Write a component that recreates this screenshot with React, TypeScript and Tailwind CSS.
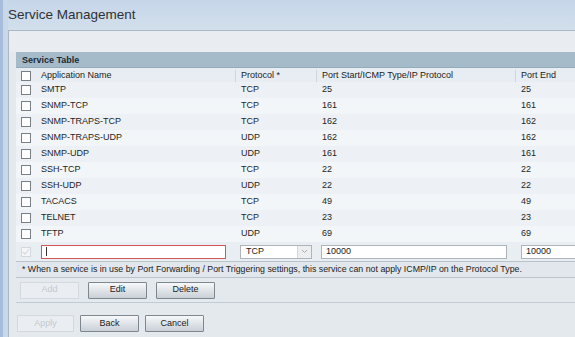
const rows = [
  ["SMTP", "TCP", "25", "25"],
  ["SNMP-TCP", "TCP", "161", "161"],
  ["SNMP-TRAPS-TCP", "TCP", "162", "162"],
  ["SNMP-TRAPS-UDP", "UDP", "162", "162"],
  ["SNMP-UDP", "UDP", "161", "161"],
  ["SSH-TCP", "TCP", "22", "22"],
  ["SSH-UDP", "UDP", "22", "22"],
  ["TACACS", "TCP", "49", "49"],
  ["TELNET", "TCP", "23", "23"],
  ["TFTP", "UDP", "69", "69"],
];

const cols = "grid grid-cols-[19px_200px_81px_199px_1fr]";

const Box = () => (
  <div className="w-[10px] h-[10px] border border-[#7a7f85] bg-white" />
);

const Btn = ({ label, disabled, w = "w-[59px]" }: { label: string; disabled?: boolean; w?: string }) =>
  disabled ? (
    <div className={`${w} h-[17px] flex items-center justify-center border border-[#d2d9df] bg-[#eaeef2] text-[#c3c9cf] text-[9px]`}>
      {label}
    </div>
  ) : (
    <div className={`${w} h-[17px] flex items-center justify-center border border-[#7e8790] rounded-[1px] bg-gradient-to-b from-[#f7f8f9] to-[#c9d0d7] text-[#222] text-[9px]`}>
      {label}
    </div>
  );

export default function App() {
  return (
    <div className="w-[575px] h-[337px] overflow-hidden flex bg-[#c8d8ea] font-['Liberation_Sans',Arial,sans-serif]">
      <div className="w-[3px] bg-[#a6bedb]" />
      <div className="flex-1 flex flex-col pl-[5px] min-w-0">
        <div className="h-[30px] flex items-center text-[13.5px] text-[#2e3136] bg-gradient-to-b from-[#c6d6e9] to-[#d2dfec]">
          Service Management
        </div>
        <div className="flex-1 flex flex-col bg-[#e4e9ee] border-l border-t border-[#aab7c4]">
          <div className="h-[21px] bg-[#e9edf1]" />
          <div className="pl-[7px] w-[580px]">
            <div className="h-[16px] flex items-center pt-[3px] pl-[6px] bg-[#a6bbc9] text-[9px] font-bold text-[#1c2a36] border-b border-[#94abba]">
              Service Table
            </div>
            <div className={`${cols} h-[14px] items-center pt-[1px] bg-[#e7edf2] text-[9px] text-[#222]`}>
              <div className="pl-[5px]"><Box /></div>
              <div className="pl-[6px]">Application Name</div>
              <div className="pl-[5px] border-l border-[#cfd6dd] h-[12px] flex items-center">Protocol *</div>
              <div className="pl-[5px] border-l border-[#cfd6dd] h-[12px] flex items-center">Port Start/ICMP Type/IP Protocol</div>
              <div className="pl-[5px] border-l border-[#cfd6dd] h-[12px] flex items-center">Port End</div>
            </div>
            {rows.map((r, i) => (
              <div
                key={r[0]}
                className={`${cols} h-[16px] items-center text-[9px] text-[#1e1e1e] ${i % 2 === 0 ? "bg-[#edf1f5]" : "bg-[#f3f6f9]"}`}
              >
                <div className="pl-[5px]"><Box /></div>
                <div className="pl-[6px]">{r[0]}</div>
                <div className="pl-[6px]">{r[1]}</div>
                <div className="pl-[6px]">{r[2]}</div>
                <div className="pl-[6px]">{r[3]}</div>
              </div>
            ))}
            <div className={`${cols} h-[19px] items-center text-[9px] text-[#222] bg-[#e9eef2]`}>
              <div className="pl-[5px]">
                <div className="w-[10px] h-[10px] border border-[#d3d8dd] bg-[#f4f6f8] flex items-center justify-center">
                  <svg width="8" height="8" viewBox="0 0 8 8">
                    <path d="M1 4 L3 6 L7 1" stroke="#d6dadf" strokeWidth="1.2" fill="none" />
                  </svg>
                </div>
              </div>
              <div className="pl-[6px]">
                <div className="w-[185px] h-[14px] bg-white border border-[#d2555a] flex items-center pl-[4px]">
                  <div className="w-px h-[9px] bg-[#333]" />
                </div>
              </div>
              <div className="pl-[5px]">
                <div className="w-[72px] h-[14px] bg-white border border-[#aeb4ba] flex items-center">
                  <div className="flex-1 pl-[5px]">TCP</div>
                  <div className="w-[14px] h-full bg-[#eceef0] border-l border-[#d4d8dc] flex items-center justify-center">
                    <svg width="7" height="5" viewBox="0 0 7 5">
                      <path d="M1 1 L3.5 3.5 L6 1" stroke="#a8adb2" strokeWidth="1" fill="none" />
                    </svg>
                  </div>
                </div>
              </div>
              <div className="pl-[5px]">
                <div className="w-[186px] h-[14px] bg-white border border-[#aeb4ba] flex items-center pl-[4px]">10000</div>
              </div>
              <div className="pl-[6px]">
                <div className="w-[70px] h-[14px] bg-white border border-[#aeb4ba] flex items-center pl-[4px]">10000</div>
              </div>
            </div>
            <div className="h-[17px] flex items-center pl-[6px] bg-[#e1e7ec] border-t border-b border-[#b9c3cc] text-[8.8px] text-[#222] whitespace-nowrap">
              * When a service is in use by Port Forwarding / Port Triggering settings, this service can not apply ICMP/IP on the Protocol Type.
            </div>
            <div className="h-[25px] flex items-center gap-[9px] pl-[4px] border-b border-[#c3ccd4]">
              <Btn label="Add" disabled />
              <Btn label="Edit" />
              <Btn label="Delete" />
            </div>
          </div>
          <div className="flex gap-[6px] pl-[8px] pt-[12px]">
            <Btn label="Apply" disabled w="w-[57px]" />
            <Btn label="Back" />
            <Btn label="Cancel" />
          </div>
        </div>
      </div>
    </div>
  );
}
